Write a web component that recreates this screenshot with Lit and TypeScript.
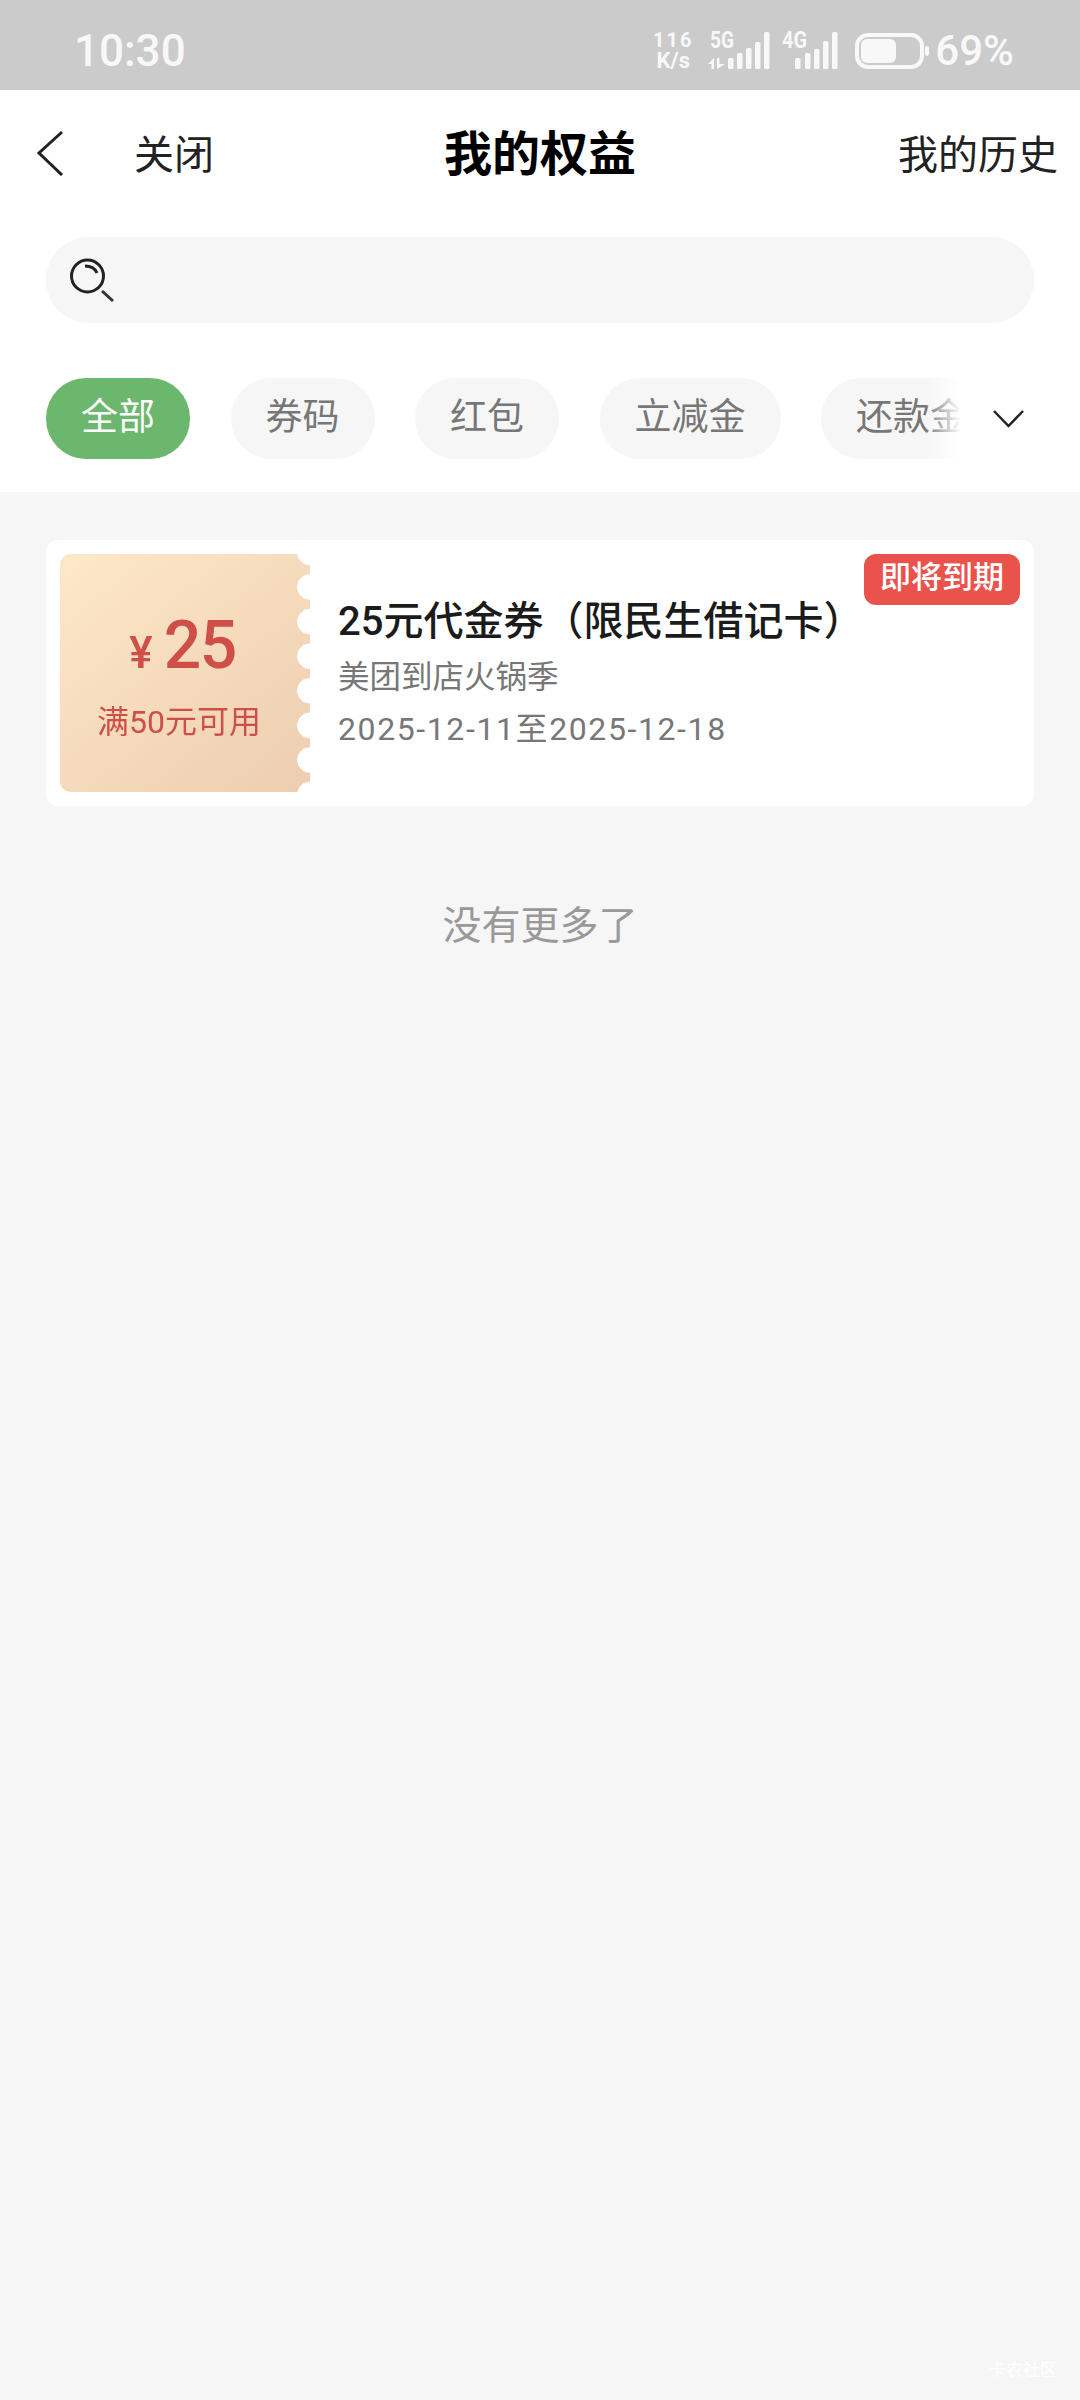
import { LitElement, css, html, svg } from 'lit';
import { customElement } from 'lit/decorators.js';

const CHIPS = ["全部", "券码", "红包", "立减金", "还款金"];

const bars = (xs: number[], tops: number[]) => xs.map((x, i) =>
    svg`<rect x="${x}" y="${tops[i]}" width="5.500" height="${37 - tops[i]}" rx="1.500" fill="#f8f8f8"></rect>`
);

@customElement("app-root")
export class AppRoot extends LitElement {

    static styles = css`
    :host {
        display: block;
        position: relative;
        width: 1080px;
        height: 2400px;
        overflow: hidden;
        background: #f6f6f6;
        font-family: Roboto, "Noto Sans CJK SC", sans-serif;
    }

    .status {
        height: 90px;
        box-sizing: border-box;
        background: #cbcbcb;
        color: #f8f8f8;
        display: flex;
        align-items: center;
        justify-content: space-between;
        padding: 12px 66px 0 74px;
    }
    .time { font-size: 44px; line-height: 50px; font-weight: 500; }
    .indicators { display: flex; align-items: center; }
    .speed {
        width: 42px;
        font-weight: 700;
        text-align: center;
        margin-right: 14px;
    }
    .speed .rate { font-size: 20px; line-height: 20px; letter-spacing: 2px; }
    .speed .unit { font-size: 22px; line-height: 22px; }
    .signal { display: block; flex: none; }
    .signal text {
        font-family: Roboto, sans-serif;
        font-size: 23px;
        font-weight: 700;
        fill: #f8f8f8;
    }
    .percent { font-size: 42px; line-height: 50px; font-weight: 500; margin-left: 6px; }

    .top { background: #fff; padding-bottom: 33px; }
    .nav {
        height: 126px;
        display: grid;
        grid-template-columns: 1fr auto 1fr;
        align-items: center;
        padding: 0 22px;
    }
    .nav-left { display: flex; align-items: center; gap: 70px; padding-left: 14px; }
    .nav-left svg { display: block; }
    .close, .history { font-size: 40px; color: #222; margin-bottom: 2px; }
    .history { text-align: right; }
    .title { font-size: 48px; font-weight: 700; color: #000; margin-bottom: 6px; }

    .search {
        height: 86px;
        margin: 21px 46px 0;
        border-radius: 43px;
        background: #f6f6f6;
        display: flex;
        align-items: center;
        padding-left: 24px;
    }

    .filters {
        position: relative;
        margin-top: 55px;
        height: 81px;
        display: flex;
        align-items: center;
    }
    .chips {
        width: 919px;
        margin-left: 46px;
        display: flex;
        gap: 40.5px;
        overflow: hidden;
    }
    .chip {
        flex: none;
        height: 81px;
        padding: 0 35px;
        border-radius: 40px;
        background: #f6f6f6;
        color: #777;
        font-size: 37px;
        line-height: 80px;
    }
    .chip.active { background: #6cb76e; color: #fdfdfd; }
    .fade {
        position: absolute;
        left: 925px;
        top: -33px;
        width: 40px;
        height: 142px;
        background: linear-gradient(90deg, rgba(255,255,255,0), #fff 90%);
    }
    .more { display: block; margin-left: 28px; flex: none; }

    .list { padding: 48px 46px 0; }
    .card {
        position: relative;
        height: 266px;
        box-sizing: border-box;
        padding: 14px;
        border-radius: 12px;
        background: #fff;
        display: flex;
    }
    .ticket {
        flex: none;
        width: 250px;
        height: 238px;
        box-sizing: border-box;
        padding-right: 12px;
        border-radius: 10px 0 0 10px;
        background: linear-gradient(140deg, #fde8c8, #edcdb0);
        color: #cd4f48;
        display: flex;
        flex-direction: column;
        align-items: center;
        justify-content: center;
        -webkit-mask: radial-gradient(circle 13px at 100% 50%, transparent 97%, #000) 0 15.7px / 100% 34.6px repeat-y;
        mask: radial-gradient(circle 13px at 100% 50%, transparent 97%, #000) 0 15.7px / 100% 34.6px repeat-y;
    }
    .amount { display: flex; align-items: baseline; line-height: 72px; margin: 5px 0 0 7px; }
    .yen { font-size: 44px; font-weight: 500; margin-right: 11px; }
    .value { font-size: 66px; font-weight: 500; letter-spacing: -1.5px; }
    .limit { font-size: 32px; line-height: 40px; margin-top: 13px; }

    .info { margin-left: 28px; padding-top: 44px; }
    .name { font-size: 40px; line-height: 48px; font-weight: 500; color: #1b1b1b; white-space: nowrap; }
    .sub, .date { line-height: 40px; color: #777; }
    .sub { font-size: 31.5px; margin-top: 12px; }
    .date { font-size: 32px; letter-spacing: 1.6px; margin-top: 11px; }

    .tag {
        position: absolute;
        top: 14px;
        right: 14px;
        height: 51px;
        padding: 0 16px;
        border-radius: 12px;
        background: #e9534c;
        color: #fff;
        font-size: 31px;
        line-height: 48px;
        font-weight: 500;
    }

    .end {
        margin-top: 93px;
        text-align: center;
        font-size: 39px;
        line-height: 54px;
        color: #999;
    }

    .watermark {
        position: absolute;
        right: 23px;
        bottom: 19px;
        font-size: 17px;
        line-height: 22px;
        color: #fff;
    }
    `;

    render() {
        return html`
            <div class="status">
                <div class="time">10:30</div>
                <div class="indicators">
                    <div class="speed"><div class="rate">116</div><div class="unit">K/s</div></div>
                    <svg class="signal" width="62" height="50" viewBox="0 -6 62 50">
                        <text x="2" y="16" textLength="24" lengthAdjust="spacingAndGlyphs">5G</text>
                        <path d="M0 32l6-6v11H3.500v-5zM9 26h2.500v6H17l-8 5z" fill="#f8f8f8"></path>
                        ${bars([20, 29, 38, 47, 56], [26, 21, 16, 10, 0])}
                    </svg>
                    <svg class="signal" style="margin-left:12px" width="56" height="50" viewBox="0 -6 56 50">
                        <text x="0" y="16" textLength="25" lengthAdjust="spacingAndGlyphs">4G</text>
                        ${bars([13, 23, 32, 41, 50], [26, 21, 17, 9, 0])}
                    </svg>
                    <svg class="signal" style="margin-left:17px" width="74" height="36" viewBox="0 0 74 36">
                        <rect x="2" y="2" width="65" height="32" rx="11" fill="none" stroke="#f8f8f8" stroke-width="4"></rect>
                        <rect x="6" y="6" width="35" height="24" rx="6" fill="#f8f8f8"></rect>
                        <rect x="70" y="13" width="4" height="10" rx="2" fill="#f8f8f8"></rect>
                    </svg>
                    <div class="percent">69%</div>
                </div>
            </div>

            <div class="top">
                <div class="nav">
                    <div class="nav-left">
                        <svg width="28" height="46" viewBox="0 0 28 46">
                            <path d="M26 2 3 23l23 22" fill="none" stroke="#222" stroke-width="3"></path>
                        </svg>
                        <div class="close">关闭</div>
                    </div>
                    <div class="title">我的权益</div>
                    <div class="history">我的历史</div>
                </div>

                <div class="search">
                    <svg width="46" height="46" viewBox="0 0 46 46">
                        <circle cx="17.500" cy="19" r="16" fill="none" stroke="#222" stroke-width="3"></circle>
                        <path d="M15 9c5 0 10 2 12 7" fill="none" stroke="#222" stroke-width="3"></path>
                        <path d="M32 34l11 10" fill="none" stroke="#333" stroke-width="3"></path>
                    </svg>
                </div>

                <div class="filters">
                    <div class="chips">
                        ${CHIPS.map((c, i) => html`<div class="chip ${i === 0 ? "active" : ""}">${c}</div>`)}
                    </div>
                    <div class="fade"></div>
                    <svg class="more" width="31" height="19" viewBox="0 0 31 19">
                        <path d="M1 2l14.500 15L30 2" fill="none" stroke="#222" stroke-width="2.500"></path>
                    </svg>
                </div>
            </div>

            <div class="list">
                <div class="card">
                    <div class="ticket">
                        <div class="amount"><span class="yen">¥</span><span class="value">25</span></div>
                        <div class="limit">满50元可用</div>
                    </div>
                    <div class="info">
                        <div class="name">25元代金券（限民生借记卡）</div>
                        <div class="sub">美团到店火锅季</div>
                        <div class="date">2025-12-11至2025-12-18</div>
                    </div>
                    <div class="tag">即将到期</div>
                </div>
                <div class="end">没有更多了</div>
            </div>

            <div class="watermark">卡农社区</div>
        `;
    }
}
